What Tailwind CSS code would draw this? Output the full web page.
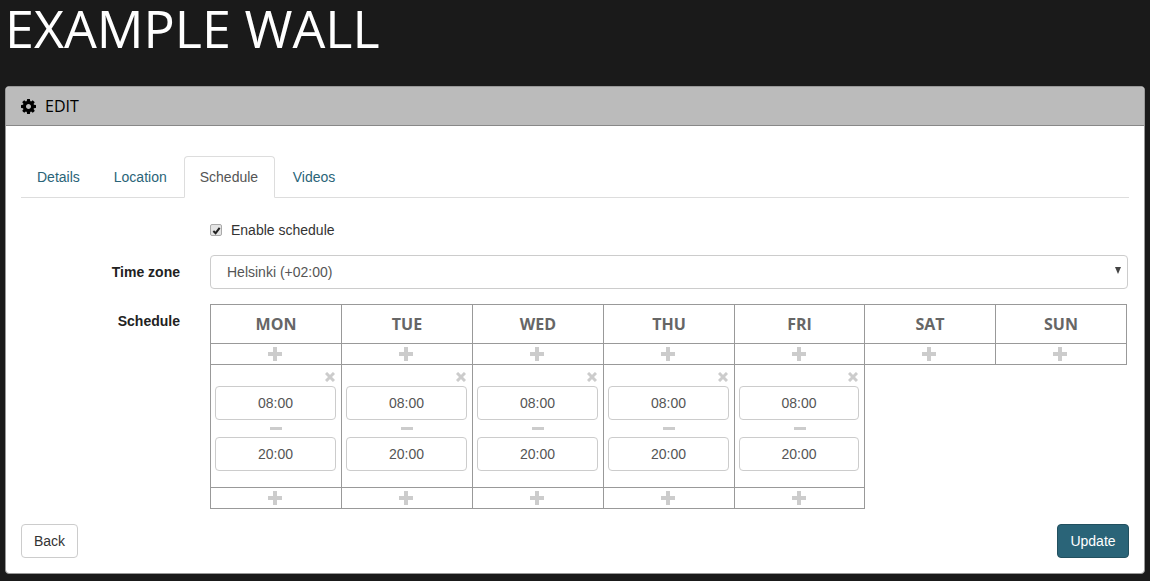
<!DOCTYPE html>
<html lang="en">
<head>
    <meta charset="UTF-8">
    <title>Edit wall</title>
    <script src="https://cdn.jsdelivr.net/npm/@tailwindcss/browser@4"></script>
</head>
<body class="bg-[#1a1a1a] h-[581px] overflow-hidden font-['Liberation_Sans',sans-serif] text-[14px] text-[#333]">
    <h1 class="h-[86px] pl-[5px] text-[52px] leading-[56px] text-white font-['Open_Sans',sans-serif]">EXAMPLE WALL</h1>

    <div class="mx-[5px] h-[488px] bg-white rounded-[4px] border border-[#999] flex flex-col">
        <div class="h-[39px] shrink-0 bg-[#bbb] border-b border-[#888] rounded-t-[3px] flex items-center pl-[15px] gap-[9px] text-black text-[16px] font-['Open_Sans',sans-serif]">
            <svg class="w-[15px] h-[15px]" viewBox="0 0 1536 1536" fill="currentColor"><path d="M1024 768q0-106-75-181t-181-75-181 75-75 181 75 181 181 75 181-75 75-181zm512-109v222q0 12-8 23t-20 13l-185 28q-19 54-39 91 35 50 107 138 10 12 10 25t-9 23q-27 37-99 108t-94 71q-12 0-26-9l-138-108q-44 23-91 38-16 136-29 186-7 28-36 28h-222q-14 0-24.500-8.500t-11.500-21.500l-28-184q-49-16-90-37l-141 107q-10 9-25 9-14 0-25-11-126-114-165-168-7-10-7-23 0-12 8-23 15-21 51-66.500t54-70.500q-27-50-41-99l-183-27q-13-2-21-12.500t-8-23.500v-222q0-12 8-23t19-13l186-28q14-46 39-92-40-57-107-138-10-12-10-24 0-10 9-23 26-36 98.500-107.500t94.500-71.500q13 0 26 10l138 107q44-23 91-38 16-136 29-186 7-28 36-28h222q14 0 24.500 8.500t11.500 21.500l28 184q49 16 90 37l142-107q9-9 24-9 13 0 25 10 129 119 165 170 7 8 7 22 0 12-8 23-15 21-51 66.500t-54 70.500q26 50 41 98l183 28q13 2 21 12.500t8 23.500z"/></svg>
            <span>EDIT</span>
        </div>

        <div class="flex-1 px-[15px] pt-[30px] flex flex-col">
            <!-- tabs -->
            <ul class="flex h-[42px] border-b border-[#ddd] text-[#2a6478]">
                <li class="pl-[16px] pr-[17px] h-[42px] flex items-center">Details</li>
                <li class="px-[17px] h-[42px] flex items-center">Location</li>
                <li class="px-[15px] w-[91px] h-[42px] flex items-center bg-white border border-[#ddd] border-b-white rounded-t-[4px] text-[#555]">Schedule</li>
                <li class="px-[18px] h-[42px] flex items-center">Videos</li>
            </ul>

            <div class="flex items-center mt-[25px] ml-[189px] h-[14px] gap-[9px]">
                <span class="w-[12px] h-[12px] rounded-[2px] bg-[#e4e4e4] border border-[#aaa] flex items-center justify-center">
                    <svg class="w-[9px] h-[9px]" viewBox="0 0 10 10" fill="none" stroke="#222" stroke-width="2.2"><path d="M1.500 5.500 4 8 8.500 2"/></svg>
                </span>
                <span>Enable schedule</span>
            </div>

            <div class="flex mt-[18px] h-[34px] items-center">
                <label class="w-[159px] text-right font-bold text-[#222]">Time zone</label>
                <div class="relative ml-[30px] w-[918px]">
                    <select class="w-full h-[34px] appearance-none bg-white border border-[#ccc] rounded-[4px] pl-[16px] text-[#555] outline-none">
                        <option>Helsinki (+02:00)</option>
                    </select>
                    <span class="absolute right-[7px] top-[12px] w-0 h-0 border-x-[3.5px] border-x-transparent border-t-[7px] border-t-[#444]"></span>
                </div>
            </div>

            <div class="flex mt-[15px]">
                <label class="w-[159px] text-right font-bold text-[#222] pt-[9px] leading-[16px]">Schedule</label>
                <table class="ml-[30px] w-[917px] h-[205px] table-fixed border-collapse border-[#999]">
                    <tr class="h-[39px] text-center font-['Open_Sans',sans-serif] font-bold text-[16px] text-[#666]">
                        <td class="w-[131px] border border-[#999]">MON</td>
                        <td class="w-[131px] border border-[#999]">TUE</td>
                        <td class="w-[131px] border border-[#999]">WED</td>
                        <td class="w-[131px] border border-[#999]">THU</td>
                        <td class="w-[130px] border border-[#999]">FRI</td>
                        <td class="w-[131px] border border-[#999]">SAT</td>
                        <td class="w-[131px] border border-[#999]">SUN</td>
                    </tr>
                    <tr class="h-[21px]">
                        <td class="border border-[#999]"><svg class="block ml-[57px] w-[14px] h-[14px] text-[#ccc]" viewBox="0 0 14 14" fill="currentColor"><path d="M5 0h4v5h5v4H9v5H5V9H0V5h5z"/></svg></td>
                        <td class="border border-[#999]"><svg class="block ml-[57px] w-[14px] h-[14px] text-[#ccc]" viewBox="0 0 14 14" fill="currentColor"><path d="M5 0h4v5h5v4H9v5H5V9H0V5h5z"/></svg></td>
                        <td class="border border-[#999]"><svg class="block ml-[57px] w-[14px] h-[14px] text-[#ccc]" viewBox="0 0 14 14" fill="currentColor"><path d="M5 0h4v5h5v4H9v5H5V9H0V5h5z"/></svg></td>
                        <td class="border border-[#999]"><svg class="block ml-[57px] w-[14px] h-[14px] text-[#ccc]" viewBox="0 0 14 14" fill="currentColor"><path d="M5 0h4v5h5v4H9v5H5V9H0V5h5z"/></svg></td>
                        <td class="border border-[#999]"><svg class="block ml-[57px] w-[14px] h-[14px] text-[#ccc]" viewBox="0 0 14 14" fill="currentColor"><path d="M5 0h4v5h5v4H9v5H5V9H0V5h5z"/></svg></td>
                        <td class="border border-[#999]"><svg class="block ml-[57px] w-[14px] h-[14px] text-[#ccc]" viewBox="0 0 14 14" fill="currentColor"><path d="M5 0h4v5h5v4H9v5H5V9H0V5h5z"/></svg></td>
                        <td class="border border-[#999]"><svg class="block ml-[57px] w-[14px] h-[14px] text-[#ccc]" viewBox="0 0 14 14" fill="currentColor"><path d="M5 0h4v5h5v4H9v5H5V9H0V5h5z"/></svg></td>
                    </tr>
                    <tr class="h-[123px]">
                        <td class="border border-[#999] align-top relative">
                            <svg class="absolute right-[6px] top-[7px] w-[10px] h-[10px] text-[#ccc]" viewBox="0 0 10 10" stroke="currentColor" stroke-width="3"><path d="M1 1l8 8M9 1l-8 8"/></svg>
                            <input value="08:00" class="block ml-[4px] mt-[21px] w-[121px] h-[34px] border border-[#ccc] rounded-[4px] text-center text-[#555] outline-none">
                            <svg class="block mx-auto mt-[7px] w-[12px] h-[3px] text-[#ccc]" viewBox="0 0 12 3" fill="currentColor"><path d="M0 0h12v3H0z"/></svg>
                            <input value="20:00" class="block ml-[4px] mt-[7px] w-[121px] h-[34px] border border-[#ccc] rounded-[4px] text-center text-[#555] outline-none">
                        </td>
                        <td class="border border-[#999] align-top relative">
                            <svg class="absolute right-[6px] top-[7px] w-[10px] h-[10px] text-[#ccc]" viewBox="0 0 10 10" stroke="currentColor" stroke-width="3"><path d="M1 1l8 8M9 1l-8 8"/></svg>
                            <input value="08:00" class="block ml-[4px] mt-[21px] w-[121px] h-[34px] border border-[#ccc] rounded-[4px] text-center text-[#555] outline-none">
                            <svg class="block mx-auto mt-[7px] w-[12px] h-[3px] text-[#ccc]" viewBox="0 0 12 3" fill="currentColor"><path d="M0 0h12v3H0z"/></svg>
                            <input value="20:00" class="block ml-[4px] mt-[7px] w-[121px] h-[34px] border border-[#ccc] rounded-[4px] text-center text-[#555] outline-none">
                        </td>
                        <td class="border border-[#999] align-top relative">
                            <svg class="absolute right-[6px] top-[7px] w-[10px] h-[10px] text-[#ccc]" viewBox="0 0 10 10" stroke="currentColor" stroke-width="3"><path d="M1 1l8 8M9 1l-8 8"/></svg>
                            <input value="08:00" class="block ml-[4px] mt-[21px] w-[121px] h-[34px] border border-[#ccc] rounded-[4px] text-center text-[#555] outline-none">
                            <svg class="block mx-auto mt-[7px] w-[12px] h-[3px] text-[#ccc]" viewBox="0 0 12 3" fill="currentColor"><path d="M0 0h12v3H0z"/></svg>
                            <input value="20:00" class="block ml-[4px] mt-[7px] w-[121px] h-[34px] border border-[#ccc] rounded-[4px] text-center text-[#555] outline-none">
                        </td>
                        <td class="border border-[#999] align-top relative">
                            <svg class="absolute right-[6px] top-[7px] w-[10px] h-[10px] text-[#ccc]" viewBox="0 0 10 10" stroke="currentColor" stroke-width="3"><path d="M1 1l8 8M9 1l-8 8"/></svg>
                            <input value="08:00" class="block ml-[4px] mt-[21px] w-[121px] h-[34px] border border-[#ccc] rounded-[4px] text-center text-[#555] outline-none">
                            <svg class="block mx-auto mt-[7px] w-[12px] h-[3px] text-[#ccc]" viewBox="0 0 12 3" fill="currentColor"><path d="M0 0h12v3H0z"/></svg>
                            <input value="20:00" class="block ml-[4px] mt-[7px] w-[121px] h-[34px] border border-[#ccc] rounded-[4px] text-center text-[#555] outline-none">
                        </td>
                        <td class="border border-[#999] align-top relative">
                            <svg class="absolute right-[6px] top-[7px] w-[10px] h-[10px] text-[#ccc]" viewBox="0 0 10 10" stroke="currentColor" stroke-width="3"><path d="M1 1l8 8M9 1l-8 8"/></svg>
                            <input value="08:00" class="block ml-[4px] mt-[21px] w-[120px] h-[34px] border border-[#ccc] rounded-[4px] text-center text-[#555] outline-none">
                            <svg class="block mx-auto mt-[7px] w-[12px] h-[3px] text-[#ccc]" viewBox="0 0 12 3" fill="currentColor"><path d="M0 0h12v3H0z"/></svg>
                            <input value="20:00" class="block ml-[4px] mt-[7px] w-[120px] h-[34px] border border-[#ccc] rounded-[4px] text-center text-[#555] outline-none">
                        </td>
                    </tr>
                    <tr class="h-[21px]">
                        <td class="border border-[#999]"><svg class="block ml-[57px] w-[14px] h-[14px] text-[#ccc]" viewBox="0 0 14 14" fill="currentColor"><path d="M5 0h4v5h5v4H9v5H5V9H0V5h5z"/></svg></td>
                        <td class="border border-[#999]"><svg class="block ml-[57px] w-[14px] h-[14px] text-[#ccc]" viewBox="0 0 14 14" fill="currentColor"><path d="M5 0h4v5h5v4H9v5H5V9H0V5h5z"/></svg></td>
                        <td class="border border-[#999]"><svg class="block ml-[57px] w-[14px] h-[14px] text-[#ccc]" viewBox="0 0 14 14" fill="currentColor"><path d="M5 0h4v5h5v4H9v5H5V9H0V5h5z"/></svg></td>
                        <td class="border border-[#999]"><svg class="block ml-[57px] w-[14px] h-[14px] text-[#ccc]" viewBox="0 0 14 14" fill="currentColor"><path d="M5 0h4v5h5v4H9v5H5V9H0V5h5z"/></svg></td>
                        <td class="border border-[#999]"><svg class="block ml-[57px] w-[14px] h-[14px] text-[#ccc]" viewBox="0 0 14 14" fill="currentColor"><path d="M5 0h4v5h5v4H9v5H5V9H0V5h5z"/></svg></td>
                    </tr>
                </table>
            </div>

            <div class="flex justify-between mt-[15px]">
                <button class="h-[34px] w-[57px] bg-white border border-[#ccc] rounded-[4px] text-[#333]">Back</button>
                <button class="h-[34px] w-[72px] bg-[#2a6478] border border-[#22505f] rounded-[4px] text-white">Update</button>
            </div>
        </div>
    </div>
</body>
</html>
